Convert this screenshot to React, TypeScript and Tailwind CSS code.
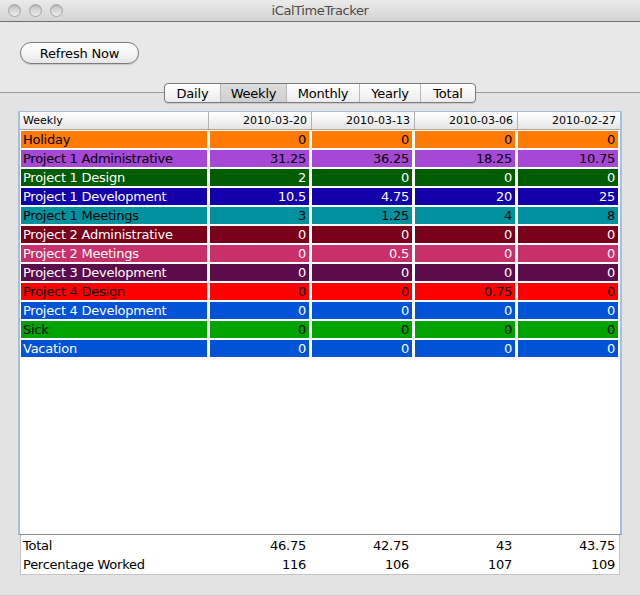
import React from "react";

type Row = { name: string; cls: string; vals: string[] };

const rows: Row[] = [
  { name: "Holiday", cls: "bg-[#ff7a00] text-black", vals: ["0", "0", "0", "0"] },
  { name: "Project 1 Administrative", cls: "bg-[#a647d6] text-black", vals: ["31.25", "36.25", "18.25", "10.75"] },
  { name: "Project 1 Design", cls: "bg-[#005c00] text-white", vals: ["2", "0", "0", "0"] },
  { name: "Project 1 Development", cls: "bg-[#1200aa] text-white", vals: ["10.5", "4.75", "20", "25"] },
  { name: "Project 1 Meetings", cls: "bg-[#00919e] text-black", vals: ["3", "1.25", "4", "8"] },
  { name: "Project 2 Administrative", cls: "bg-[#7a0019] text-white", vals: ["0", "0", "0", "0"] },
  { name: "Project 2 Meetings", cls: "bg-[#c92f68] text-white", vals: ["0", "0.5", "0", "0"] },
  { name: "Project 3 Development", cls: "bg-[#5c0c4a] text-white", vals: ["0", "0", "0", "0"] },
  { name: "Project 4 Design", cls: "bg-[#ff0000] text-black", vals: ["0", "0", "0.75", "0"] },
  { name: "Project 4 Development", cls: "bg-[#0052d6] text-white", vals: ["0", "0", "0", "0"] },
  { name: "Sick", cls: "bg-[#00a300] text-black", vals: ["0", "0", "0", "0"] },
  { name: "Vacation", cls: "bg-[#0052d6] text-white", vals: ["0", "0", "0", "0"] },
];

const colW = ["w-[99px]", "w-[100px]", "w-[100px]", "w-[100px]"];
const dates = ["2010-03-20", "2010-03-13", "2010-03-06", "2010-02-27"];

function Light() {
  return (
    <div className="w-[13px] h-[13px] rounded-full border border-[#a8a8a8] bg-gradient-to-b from-[#c4c4c4] to-[#ececec] shadow-[inset_0_1px_1px_rgba(0,0,0,0.15)]" />
  );
}

export default function App() {
  const tabs = [
    { t: "Daily", w: "w-[55px]", sel: false },
    { t: "Weekly", w: "w-[66px]", sel: true },
    { t: "Monthly", w: "w-[73px]", sel: false },
    { t: "Yearly", w: "w-[61px]", sel: false },
    { t: "Total", w: "w-[55px]", sel: false },
  ];
  return (
    <div className="w-[640px] h-[596px] bg-[#e8e8e8] flex flex-col overflow-hidden text-black font-['DejaVu_Sans',sans-serif]">
      {/* title bar */}
      <div className="h-[22px] shrink-0 border-b border-[#6f6f6f] bg-gradient-to-b from-[#ebebeb] to-[#d3d3d3] grid grid-cols-[1fr_auto_1fr] items-center">
        <div className="flex items-center gap-[8px] pl-[8px]">
          <Light />
          <Light />
          <Light />
        </div>
        <div className="text-[13px] tracking-[-0.4px] text-[#4c4c4c] leading-none">iCalTimeTracker</div>
        <div />
      </div>
      {/* toolbar */}
      <div className="h-[70px] shrink-0 pt-[20px] pl-[20px]">
        <button className="block h-[22px] w-[119px] rounded-full border border-[#7c7c7c] bg-gradient-to-b from-[#ffffff] via-[#f6f6f6] to-[#e6e6e6] shadow-[0_1px_1px_rgba(0,0,0,0.15)] text-[13px] tracking-[-0.2px] leading-none text-black">
          Refresh Now
        </button>
      </div>
      {/* tab view */}
      <div className="flex-1 border-t border-[#9a9a9a] bg-[#e3e3e3] flex flex-col border-b border-b-[#cbcbcb]">
        <div className="flex justify-center -mt-[10px]">
          <div className="flex h-[20px] rounded-[4px] border border-[#7a7a7a] bg-gradient-to-b from-[#ffffff] to-[#ececec] shadow-[0_1px_1px_rgba(0,0,0,0.12)] overflow-hidden">
            {tabs.map((tb, i) => (
              <div
                key={tb.t}
                className={
                  "h-full flex items-center justify-center text-[13px] tracking-[-0.2px] leading-none " +
                  tb.w +
                  (i > 0 ? " border-l border-[#b9b9b9]" : "") +
                  (tb.sel ? " bg-gradient-to-b from-[#dcdcdc] to-[#d0d0d0]" : "")
                }
              >
                {tb.t}
              </div>
            ))}
          </div>
        </div>
        {/* table */}
        <div className="mt-[8px] mx-[18px] w-[604px] border-x-2 border-t border-x-[#a3bfe3] border-t-[#a3bfe3] border-b border-b-[#8e8e8e] bg-white">
          <div className="h-[422px] flex flex-col">
            <div className="h-[18px] flex border-b border-[#a8a8a8] bg-gradient-to-b from-[#ffffff] via-[#f3f3f3] to-[#e4e4e4] text-[11px] leading-[17px]">
              <div className="w-[189px] border-r border-[#b3b3b3] pl-[3px]">Weekly</div>
              {dates.map((d, i) => (
                <div
                  key={d}
                  className={
                    (i < 3 ? "w-[103px] border-r border-[#b3b3b3] " : "w-[102px] ") + "text-right pr-[4px]"
                  }
                >
                  {d}
                </div>
              ))}
            </div>
            <div className="flex flex-col gap-[2px] pt-[1px] pl-[1px] text-[13px] tracking-[-0.25px] leading-[17px]">
              {rows.map((r) => (
                <div key={r.name} className="flex gap-[3px] h-[17px]">
                  <div className={"w-[186px] pl-[2px] whitespace-nowrap " + r.cls}>{r.name}</div>
                  {r.vals.map((v, i) => (
                    <div key={i} className={colW[i] + " text-right pr-[3px] " + r.cls}>
                      {v}
                    </div>
                  ))}
                </div>
              ))}
            </div>
          </div>
        </div>
        {/* totals */}
        <div className="mx-[20px] w-[600px] border-x border-b border-[#c4c4c4] bg-white pt-[1px] text-[13px] tracking-[-0.25px] leading-[19px]">
          {[
            ["Total", "46.75", "42.75", "43", "43.75"],
            ["Percentage Worked", "116", "106", "107", "109"],
          ].map((r) => (
            <div key={r[0]} className="flex gap-[3px] h-[19px]">
              <div className="w-[186px] pl-[2px] whitespace-nowrap">{r[0]}</div>
              {r.slice(1).map((v, i) => (
                <div key={i} className={colW[i] + " text-right pr-[3px]"}>
                  {v}
                </div>
              ))}
            </div>
          ))}
        </div>
      </div>
    </div>
  );
}
